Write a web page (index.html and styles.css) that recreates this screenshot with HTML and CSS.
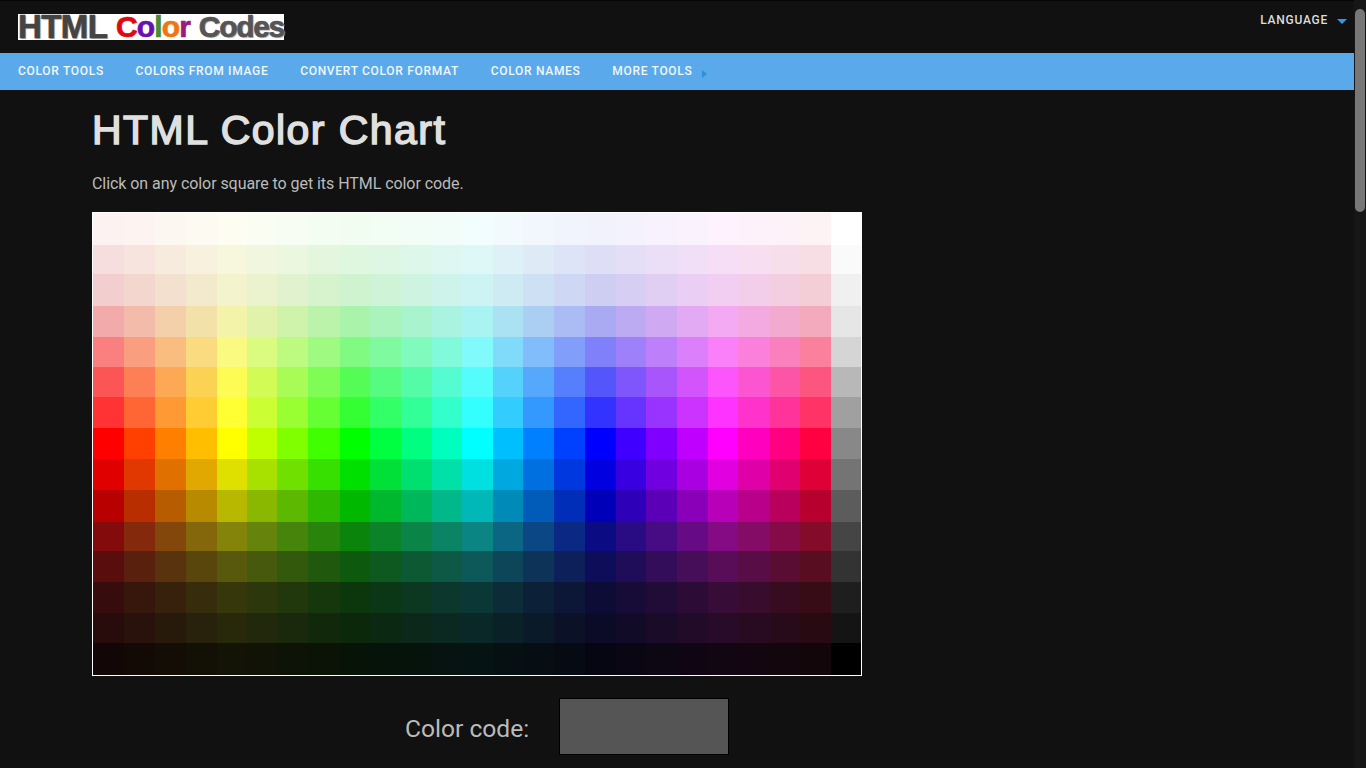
FILE: index.html
```html
<!DOCTYPE html>
<html lang="en">
<head>
    <meta charset="UTF-8">
    <meta name="viewport" content="width=device-width, initial-scale=1.0">
    <title>HTML Color Chart</title>
    <link rel="stylesheet" href="styles.css">
</head>
<body>
    <div class="page">
        <div class="main">
            <header class="top-bar">
                <a class="logo" href="#">
                    <span class="logo-html">HTML</span>
                    <span class="logo-color"><span class="c1">C</span><span class="c2">o</span><span class="c3">l</span><span class="c4">o</span><span class="c5">r</span></span>
                    <span class="logo-codes">Codes</span>
                </a>
                <a class="language" href="#">LANGUAGE<span class="arrow-down"></span></a>
            </header>
            <nav class="nav">
                <a href="#">COLOR TOOLS</a>
                <a href="#">COLORS FROM IMAGE</a>
                <a href="#">CONVERT COLOR FORMAT</a>
                <a href="#">COLOR NAMES</a>
                <a href="#">MORE TOOLS<span class="arrow-right"></span></a>
            </nav>
            <main class="content">
                <h1>HTML Color Chart</h1>
                <p class="intro">Click on any color square to get its HTML color code.</p>
                <div class="chart" id="chart"></div>
                <div class="code-row">
                    <span class="code-label">Color code:</span>
                    <div class="code-box"></div>
                </div>
            </main>
        </div>
        <div class="scrollbar"><div class="thumb"></div></div>
    </div>
    <script src="chart.js"></script>
</body>
</html>
```

FILE: styles.css
```css
* {
    box-sizing: border-box;
}
html, body {
    height: 100%;
}
body {
    font-family: Roboto, "Liberation Sans", sans-serif;
    background: #111111;
    color: #bbbbbb;
    margin: 0;
    overflow: hidden;
}
a {
    text-decoration: none;
}
.page {
    display: flex;
    height: 100vh;
    overflow: hidden;
}
.main {
    flex: 1;
    min-width: 0;
}
.scrollbar {
    width: 12px;
    padding: 9px 1px 0;
    background: #161616;
}
.thumb {
    height: 203px;
    background: #777777;
    border-radius: 5px;
}
.top-bar {
    display: flex;
    justify-content: space-between;
    align-items: flex-start;
    height: 53px;
    padding: 14px 7px 0 18px;
    border-top: 1px solid #050505;
}
.logo {
    display: flex;
    align-items: center;
    justify-content: space-between;
    width: 266px;
    height: 26px;
    margin-top: -1px;
    background: #ffffff;
    font-family: "Liberation Sans", Arial, sans-serif;
    font-weight: bold;
    line-height: 26px;
    white-space: nowrap;
}
.logo-html {
    font-size: 33px;
    letter-spacing: -0.6px;
    color: #444444;
    -webkit-text-stroke: 0.7px #444444;
    text-shadow: 1px 1px 1px #aaaaaa;
}
.logo-color {
    font-size: 30px;
    letter-spacing: -0.9px;
    -webkit-text-stroke: 0.7px;
}
.logo-codes {
    font-size: 30px;
    letter-spacing: -1.3px;
    color: #555555;
    -webkit-text-stroke: 0.7px #555555;
    text-shadow: 1px 1px 1px #aaaaaa;
}
.c1 { color: #dd0a12; }
.c2 { color: #6a10b0; }
.c3 { color: #4a8a30; }
.c4 { color: #f07510; }
.c5 { color: #9a1a80; }
.language {
    display: flex;
    align-items: center;
    margin-top: -2px;
    font-size: 12px;
    font-weight: 500;
    letter-spacing: 0.75px;
    line-height: 14px;
    color: #dddddd;
}
.arrow-down {
    width: 0;
    height: 0;
    margin-left: 9px;
    margin-top: 2px;
    border-left: 5px solid transparent;
    border-right: 5px solid transparent;
    border-top: 5px solid #2e9ae6;
}
.nav {
    display: flex;
    align-items: center;
    gap: 31.7px;
    height: 37px;
    padding: 0 0 2px 18px;
    background: #5aaaeb;
}
.nav a {
    display: flex;
    align-items: center;
    font-size: 12px;
    font-weight: 500;
    letter-spacing: 0.7px;
    color: #f0f6fc;
}
.arrow-right {
    width: 0;
    height: 0;
    margin-left: 10px;
    margin-top: 6px;
    border-top: 4px solid transparent;
    border-bottom: 4px solid transparent;
    border-left: 5px solid #2e8fdc;
}
.content {
    padding: 0 0 0 92px;
}
h1 {
    margin: 0;
    padding-top: 17px;
    font-family: "Liberation Sans", Arial, sans-serif;
    font-size: 41px;
    font-weight: normal;
    line-height: 47px;
    letter-spacing: 1.45px;
    -webkit-text-stroke: 1.5px #e0e0e0;
    color: #e0e0e0;
}
.intro {
    margin: 0;
    padding-top: 20px;
    font-size: 16px;
    line-height: 19px;
    letter-spacing: -0.06px;
}
.chart {
    display: grid;
    grid-template-columns: 31px 31px 31px 31px 30px 30px 31px 32px 30px 31px 31px 30px 31px 30px 31px 31px 31px 30px 31px 31px 30px 32px 30px 31px 30px;
    grid-template-rows: 32px 29px 32px 31px 30px 30px 31px 31px 31px 32px 29px 31px 31px 30px 32px;
    width: 770px;
    height: 464px;
    margin-top: 19px;
    border: 1px solid #ffffff;
}
.code-row {
    display: flex;
    align-items: center;
    gap: 30px;
    margin: 22px 0 0 313px;
}
.code-label {
    font-size: 24.6px;
    line-height: 30px;
    padding-top: 5px;
}
.code-box {
    width: 170px;
    height: 57px;
    background: #555555;
    border: 1px solid #000000;
}
```

FILE: chart.js
```js
// [saturation, lightness] per row, top to bottom
const rows = [
    [75, 97], [60, 92], [60, 88], [76, 81], [92, 74],
    [96, 66], [100, 60], [100, 50], [100, 44], [100, 36],
    [85, 28], [75, 20], [65, 13], [55, 10], [50, 5]
];
const grays = [
    '#ffffff', '#fafafa', '#f0f0f0', '#e6e6e6', '#d5d5d5',
    '#b8b8b8', '#a0a0a0', '#888888', '#747474', '#5c5c5c',
    '#454545', '#333333', '#1e1e1e', '#141414', '#000000'
];
const chart = document.getElementById('chart');

rows.forEach((row, r) => {
    for (let c = 0; c < 24; c++) {
        const cell = document.createElement('div');
        cell.style.background = `hsl(${c * 15}, ${row[0]}%, ${row[1]}%)`;
        chart.appendChild(cell);
    }
    const gray = document.createElement('div');
    gray.style.background = grays[r];
    chart.appendChild(gray);
});
```
